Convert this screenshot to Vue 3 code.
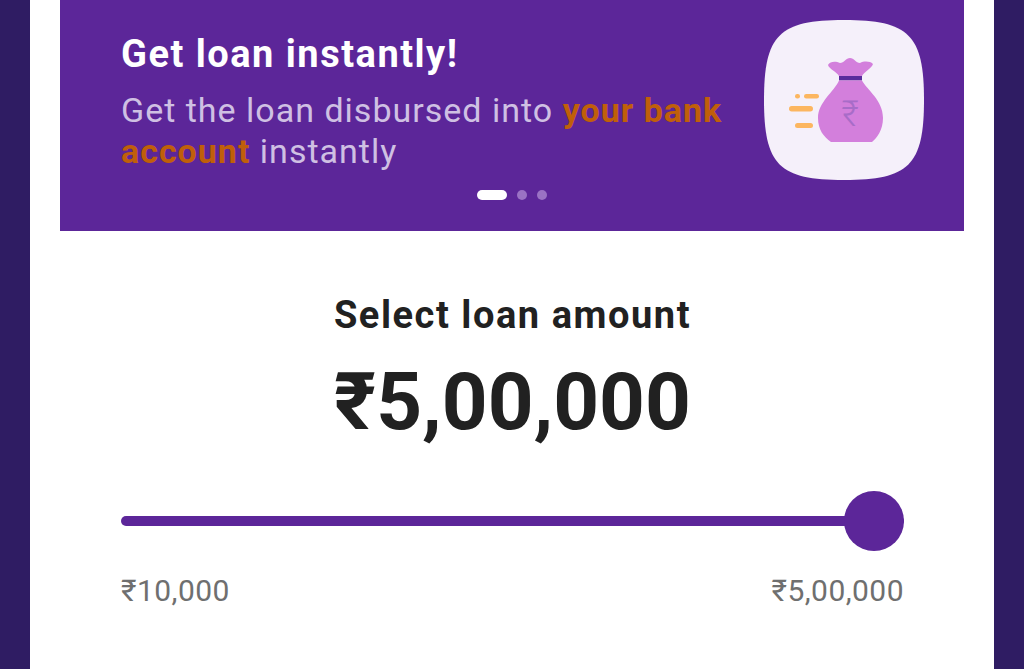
<script setup>
const dots = [true, false, false]
</script>

<template>
  <div class="page">
    <main class="card">
      <section class="banner">
        <div class="banner-row">
          <div class="banner-text">
            <h1 class="title">Get loan instantly!</h1>
            <p class="desc">Get the loan disbursed into <span class="accent">your bank</span> <span class="accent">account</span> instantly</p>
          </div>
          <svg class="tile" viewBox="0 0 160 160" width="160" height="160" aria-hidden="true">
            <path d="M80 0C145 0 160 15 160 80S145 160 80 160 0 145 0 80 15 0 80 0Z" fill="#f5f0fa" />
            <rect x="31" y="74" width="5" height="4.500" rx="2.200" fill="#fcb660" />
            <rect x="40" y="74" width="15" height="4.500" rx="2.200" fill="#fcb660" />
            <rect x="25" y="86" width="24" height="5.500" rx="2.700" fill="#fcb660" />
            <rect x="31" y="103" width="18" height="5" rx="2.500" fill="#fcb660" />
            <path d="M64 45C66 41 72 41 76 43 80 43 82 38 86 38 90 38 92 43 96 43 100 41 106 41 109 44 108 48 100 52 98 56H75C73 52 65 49 64 45Z" fill="#d37fdc" />
            <rect x="75" y="56" width="23" height="4.500" fill="#5a2c9c" />
            <path d="M75 60.500H98C103 70 119 80 119 98 119 110 113 118 108 122H67C60 117 54 110 54 98 54 82 70 72 75 60.500Z" fill="#d37fdc" />
            <text x="86" y="106" class="bag-rupee">₹</text>
          </svg>
        </div>
        <div class="dots">
          <span v-for="(on, i) in dots" :key="i" class="dot" :class="{ active: on }"></span>
        </div>
      </section>

      <section class="amount">
        <h2 class="label">Select loan amount</h2>
        <div class="value">₹5,00,000</div>
        <div class="slider">
          <div class="track"></div>
          <div class="thumb"></div>
        </div>
        <div class="limits">
          <span>₹10,000</span>
          <span>₹5,00,000</span>
        </div>
      </section>
    </main>
  </div>
</template>

<style>
html, body { margin: 0; background: #2f1c63; }
</style>

<style scoped>
.page {
  height: 669px;
  padding: 0 30px;
  box-sizing: border-box;
  background: #2f1c63;
  overflow: hidden;
  font-family: Roboto, "Noto Sans", sans-serif;
}
.card {
  height: 100%;
  background: #fff;
  padding: 0 30px;
}
.banner {
  height: 231px;
  background: #5c2699;
  padding: 0 40px 0 61px;
  box-sizing: border-box;
  display: flex;
  flex-direction: column;
}
.banner-row {
  display: flex;
  justify-content: space-between;
  align-items: flex-start;
  height: 190px;
}
.banner-text { width: 620px; padding-top: 33px; }
.title {
  margin: 0;
  font-size: 38px;
  line-height: 42px;
  font-weight: 700;
  letter-spacing: 1.5px;
  color: #fff;
}
.desc {
  margin: 15px 0 0;
  font-size: 34px;
  line-height: 41px;
  letter-spacing: 1px;
  color: #cfc0e3;
}
.accent { color: #c05f0a; font-weight: 700; }
.tile {
  margin-top: 20px;
  flex: none;
  display: block;
}
.bag-rupee {
  font-family: Roboto, sans-serif;
  font-size: 36px;
  font-weight: 300;
  fill: #a86cc8;
  text-anchor: middle;
}
.dots {
  display: flex;
  justify-content: center;
  align-items: center;
  gap: 10px;
  margin-left: -21px;
}
.dot {
  width: 10px;
  height: 10px;
  border-radius: 50%;
  background: #9a72c4;
}
.dot.active {
  width: 30px;
  border-radius: 5px;
  background: #fff;
}
.amount {
  padding: 63px 60px 0 61px;
  color: #212121;
  text-align: center;
}
.label {
  margin: 0;
  font-size: 38px;
  line-height: 42px;
  font-weight: 700;
  letter-spacing: 1.55px;
}
.value {
  margin-top: 19px;
  font-size: 80px;
  line-height: 94px;
  font-weight: 700;
}
.slider {
  position: relative;
  margin-top: 42px;
  height: 60px;
  display: flex;
  align-items: center;
}
.track {
  width: 100%;
  height: 10px;
  border-radius: 5px;
  background: #5c2699;
}
.thumb {
  position: absolute;
  right: 0;
  top: 0;
  width: 60px;
  height: 60px;
  border-radius: 50%;
  background: #5c2699;
}
.limits {
  display: flex;
  justify-content: space-between;
  margin-top: 20px;
  font-size: 30px;
  line-height: 40px;
  letter-spacing: 0.45px;
  color: #6f6f6f;
}
</style>
